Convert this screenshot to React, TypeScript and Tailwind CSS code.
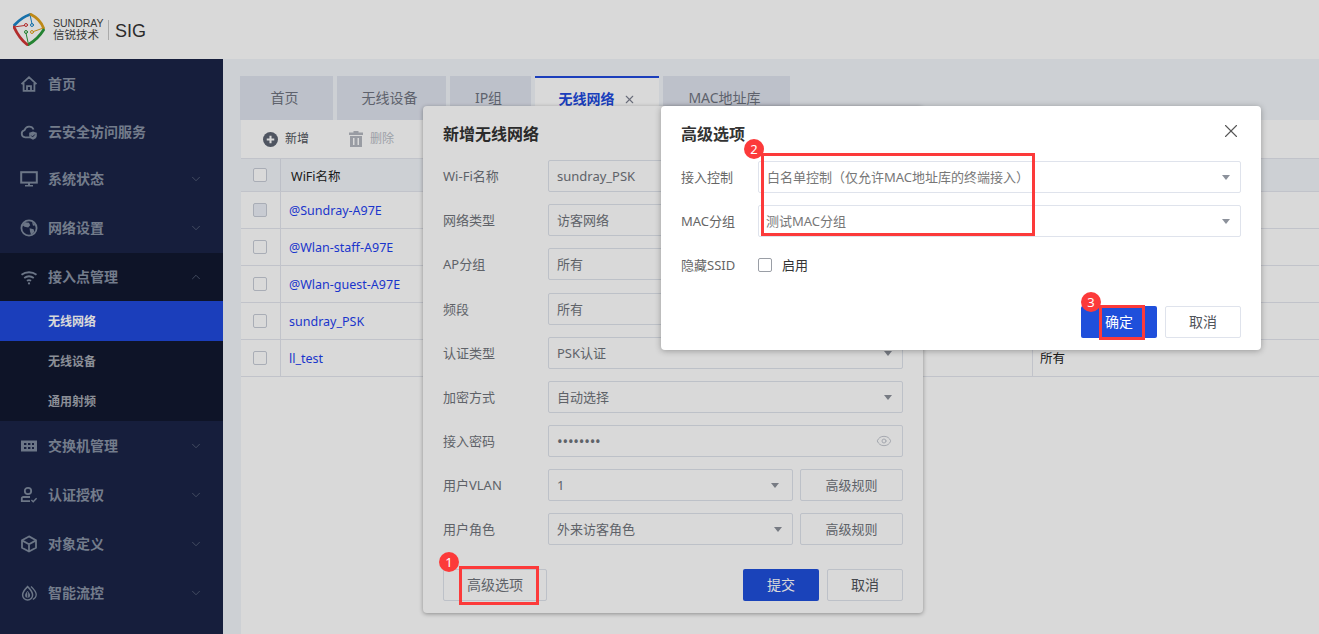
import React from "react"
import { ChevronDown, ChevronUp, Eye, X } from "lucide-react"

const navTop = [
  { label: "首页", icon: "home", h: "h-[48px]", arrow: false },
  { label: "云安全访问服务", icon: "cloud", h: "h-[47px]", arrow: false },
  { label: "系统状态", icon: "monitor", h: "h-[48px]", arrow: true },
  { label: "网络设置", icon: "globe", h: "h-[50px]", arrow: true },
]

const navBottom = [
  { label: "交换机管理", icon: "switch" },
  { label: "认证授权", icon: "user" },
  { label: "对象定义", icon: "cube" },
  { label: "智能流控", icon: "drop" },
]

const rows = ["@Sundray-A97E", "@Wlan-staff-A97E", "@Wlan-guest-A97E", "sundray_PSK", "ll_test"]

function NavIcon({ name }: { name: string }) {
  const stroke = { fill: "none", stroke: "currentColor", strokeWidth: 1.8 }
  return (
    <svg viewBox="0 0 18 18" className="h-[18px] w-[18px] shrink-0 text-[#7f8b9f]">
      {name === "home" && (
        <path {...stroke} d="M1.5 9.2 9 2.2l7.5 7M3.6 8v7.8h10.8V8M7 15.8v-4.6h4v4.6" />
      )}
      {name === "cloud" && (
        <>
          <path {...stroke} d="M10.5 14.4H5.2a3.7 3.7 0 0 1-.6-7.3 4.8 4.8 0 0 1 9-.6" />
          <path fill="currentColor" d="M13 8.6l3.8 1.2v3c0 2-1.6 3.3-3.8 4-2.2-.7-3.8-2-3.8-4v-3z" />
          <path fill="none" stroke="#1a2447" strokeWidth="1" d="M11.3 12.6l1.3 1.3 2.2-2.4" />
        </>
      )}
      {name === "monitor" && (
        <>
          <rect {...stroke} strokeWidth={2} x="1.2" y="2.2" width="15.6" height="10.4" />
          <path fill="currentColor" d="M8 12.6h2v2.4h3v1.6H5V15h3z" />
        </>
      )}
      {name === "globe" && (
        <>
          <circle {...stroke} cx="9" cy="9" r="7.6" />
          <path fill="currentColor" d="M5 3.2l4 .6 1.2 2.4-2 2.4-3.6-.8-2-1.6zM9.6 9.2l4 1 .8 2.6-3.2 3.2-1.2-3.4zM12 2.8l3.6 3.4-2.6.6z" />
        </>
      )}
      {name === "wifi" && (
        <>
          <path {...stroke} d="M1.5 6.8c4.4-3.4 10.6-3.4 15 0M4.2 10c2.9-2.1 6.7-2.1 9.6 0" />
          <path {...stroke} d="M6.9 12.8c1.3-.8 2.9-.8 4.2 0" />
          <circle cx="9" cy="15.4" r="1.1" fill="currentColor" />
        </>
      )}
      {name === "switch" && (
        <path
          fill="currentColor"
          fillRule="evenodd"
          d="M1 3.5h16v11H1zM4 6v2h2.4V6zm4 0v2h2.4V6zm4 0v2h2V6zM4 10v2h2.4v-2zm4 0v2h2.4v-2zm4 0v2h2v-2z"
        />
      )}
      {name === "user" && (
        <>
          <circle {...stroke} cx="8" cy="5" r="3.2" />
          <path {...stroke} d="M10 11H3.4c-1 0-1.6.7-1.6 1.6v2.6H10" />
          <path {...stroke} strokeWidth={1.4} d="M11.4 14l1.8 1.8 3.4-3.6" />
        </>
      )}
      {name === "cube" && (
        <path {...stroke} d="M9 1.4l7 3.8v7.6l-7 3.8-7-3.8V5.2zM2.4 5.6 9 9.2l6.6-3.6M9 9.2v7.2" />
      )}
      {name === "drop" && (
        <>
          <path {...stroke} strokeWidth={1.5} d="M7.6 2.6c3 3 5 5.6 5 8.4a5 5 0 0 1-10 0c0-2.800 2-5.400 5-8.400z" />
          <path fill="currentColor" d="M7.600 7c1.500 1.500 2.500 2.900 2.500 4.200a2.500 2.500 0 0 1-5 0c0-1.300 1-2.700 2.500-4.200z" />
          <path fill="none" stroke="#1a2447" strokeWidth="0.8" d="M7.600 8v5.600" />
          <path {...stroke} strokeWidth={1.3} d="M11 2.400c3 2.800 5.200 5.400 5.200 8.200 0 2.400-1.400 4-3.400 4.800" />
        </>
      )}
    </svg>
  )
}

function NavItem({ label, icon, h, arrow = true }: { label: string; icon: string; h: string; arrow?: boolean }) {
  return (
    <div className={`flex items-center pl-5 pr-[20px] ${h}`}>
      <NavIcon name={icon} />
      <span className="ml-[10px] text-[14px] font-bold leading-5 text-[#8892a4]">{label}</span>
      {arrow && <ChevronDown className="ml-auto h-[14px] w-[14px] text-[#5f6a80]" strokeWidth={1.3} />}
    </div>
  )
}

function Logo() {
  return (
    <svg viewBox="0 0 32 34" className="h-[34px] w-[32px]">
      <g fill="none" strokeLinecap="round">
        <path stroke="#1b85c9" strokeWidth="2.800" d="M1.500 12Q9 4 17 1.500" />
        <path stroke="#1b85c9" strokeWidth="1" d="M17 1.500 19 11" />
        <circle cx="19" cy="12" r="1.500" stroke="#1b85c9" strokeWidth="1" />
        <path stroke="#e0a11b" strokeWidth="2.800" d="M18 1.500Q27 6 30.500 15" />
        <path stroke="#e0a11b" strokeWidth="1" d="M30.500 15 20.500 18.500" />
        <circle cx="19" cy="19" r="1.500" stroke="#e0a11b" strokeWidth="1" />
        <path stroke="#2b9a3b" strokeWidth="2.800" d="M30.500 17Q25 26 15.500 31.500" />
        <path stroke="#2b9a3b" strokeWidth="1" d="M15.500 31.500 13 20" />
        <circle cx="13" cy="19" r="1.500" stroke="#2b9a3b" strokeWidth="1" />
        <path stroke="#d23636" strokeWidth="2.800" d="M14 31.500Q6 25 1 14" />
        <path stroke="#d23636" strokeWidth="1" d="M1 14 11.500 12.500" />
        <circle cx="13" cy="12" r="1.500" stroke="#d23636" strokeWidth="1" />
      </g>
    </svg>
  )
}

function Caret({ className = "" }: { className?: string }) {
  return <span className={`h-0 w-0 border-x-[4px] border-t-[5px] border-x-transparent border-t-[#8c919b] ${className}`} />
}

function Box({ text, className = "", caret = true }: { text: string; className?: string; caret?: boolean }) {
  return (
    <div className={`flex h-8 items-center rounded-[2px] border border-[#dfe3ec] pl-2 pr-[10px] text-[13px] leading-5 text-[#70747b] ${className}`}>
      <span>{text}</span>
      {caret && <Caret className="ml-auto" />}
    </div>
  )
}

function FormRow({ label, children, className = "" }: { label: string; children: React.ReactNode; className?: string }) {
  return (
    <div className={`flex items-center ${className}`}>
      <span className="w-[105px] shrink-0 text-[13px] leading-5 text-[#70747b]">{label}</span>
      {children}
    </div>
  )
}

function Btn({ text, primary = false, className = "" }: { text: string; primary?: boolean; className?: string }) {
  return (
    <div
      className={`flex h-8 items-center justify-center rounded-[2px] text-[14px] leading-5 ${
        primary ? "bg-[#1f4fdb] text-white" : "border border-[#dfe3ec] bg-white text-[#50545a]"
      } ${className}`}
    >
      {text}
    </div>
  )
}

function Badge({ n, className }: { n: number; className: string }) {
  return (
    <span className={`absolute flex h-5 w-5 items-center justify-center rounded-full bg-[#fc3a3a] text-[13px] leading-none text-white ${className}`}>
      {n}
    </span>
  )
}

function App() {
  return (
    <div className="relative h-[634px] w-[1319px] overflow-hidden bg-white font-['Noto_Sans','Noto_Sans_CJK_SC',sans-serif]">
      <header className="flex h-[59px] items-center pl-[13px]">
        <Logo />
        <div className="ml-2 flex w-[47px] flex-col font-['Liberation_Sans','Noto_Sans_CJK_SC',sans-serif] text-[#444]">
          <span className="text-[10.500px] leading-[11px]">SUNDRAY</span>
          <span className="text-[11.500px] leading-[13px]">信锐技术</span>
        </div>
        <span className="ml-[8px] h-5 w-px bg-[#c8c8c8]" />
        <span className="ml-[6px] mt-[2px] font-['Liberation_Sans',sans-serif] text-[18px] leading-6 text-[#333]">SIG</span>
      </header>

      <div className="flex h-[575px]">
        <aside className="flex w-[223px] shrink-0 flex-col bg-[#1a2447] pt-px">
          {navTop.map((item) => (
            <NavItem key={item.label} label={item.label} icon={item.icon} h={item.h} arrow={item.arrow} />
          ))}
          <div className="bg-[#111830]">
            <div className="flex h-[48px] items-center pl-5 pr-[20px]">
              <NavIcon name="wifi" />
              <span className="ml-[10px] text-[14px] font-bold leading-5 text-[#8892a4]">接入点管理</span>
              <ChevronUp className="ml-auto h-[14px] w-[14px] text-[#5f6a80]" strokeWidth={1.3} />
            </div>
            <div className="flex h-10 items-center bg-[#2049dc] pl-12 pt-[2px] text-[12px] font-bold leading-5 text-white">无线网络</div>
            <div className="flex h-10 items-center pl-12 pt-[2px] text-[12px] font-bold leading-5 text-[#a4a8b2]">无线设备</div>
            <div className="flex h-10 items-center pl-12 pt-[2px] text-[12px] font-bold leading-5 text-[#a4a8b2]">通用射频</div>
          </div>
          {navBottom.map((item) => (
            <NavItem key={item.label} label={item.label} icon={item.icon} h="h-[49px]" />
          ))}
        </aside>

        <main className="flex flex-1 flex-col bg-[#f1f5fa] pl-[17px] pt-[17px]">
          <div className="flex h-[44px] gap-1 text-[14px] leading-5 text-[#6f7480]">
            <div className="flex w-[93px] items-center justify-center bg-[#dfe3ee] pr-1">首页</div>
            <div className="flex w-[109px] items-center justify-center bg-[#dfe3ee] pr-1">无线设备</div>
            <div className="flex w-[81px] items-center justify-center bg-[#dfe3ee] pr-1">IP组</div>
            <div className="flex w-[124px] items-center justify-center gap-2 border-t-2 border-[#2049dc] bg-white font-bold text-[#2049dc]">
              无线网络
              <X className="h-[13px] w-[13px] text-[#7c8190]" strokeWidth={2} />
            </div>
            <div className="flex w-[127px] items-center justify-center bg-[#dfe3ee] pr-1">MAC地址库</div>
          </div>

          <div className="ml-px flex-1 bg-white">
            <div className="flex h-[39px] items-center border-b border-[#e3e6ee] pl-[22px] text-[12px] leading-5">
              <svg viewBox="0 0 16 16" className="h-[15px] w-[15px]">
                <circle cx="8" cy="8" r="8" fill="#5d6472" />
                <path d="M8 4v8M4 8h8" stroke="#fff" strokeWidth="2.200" />
              </svg>
              <span className="ml-[7px] text-[#50545c]">新增</span>
              <svg viewBox="0 0 14 16" className="ml-[40px] h-[16px] w-[14px]">
                <path fill="#b4b8c0" d="M4.500 0h5v1.500H14V4H0V1.500h4.500zM1 5h12v11H1zM4 7v7h1.500V7zM8.500 7v7H10V7z" fillRule="evenodd" />
              </svg>
              <span className="ml-[7px] text-[#b9bdc6]">删除</span>
            </div>
            <div className="flex h-[33px] border-b border-[#e3e6ee] bg-[#f1f5fa] text-[12.500px] leading-5 text-[#222]">
              <div className="flex w-[40px] items-center border-r border-[#dde1ea] pl-3">
                <span className="h-[14px] w-[14px] rounded-[2px] border border-[#c7ccd6] bg-white" />
              </div>
              <div className="flex flex-1 items-center pl-[10px] pt-[3px]">WiFi名称</div>
            </div>
            {rows.map((name, i) => (
              <div key={name} className="flex h-[37px] border-b border-[#e3e6ee] text-[12.500px] leading-5">
                <div className="flex w-[40px] items-center border-r border-[#e3e6ee] pl-3">
                  <span className={`h-[14px] w-[14px] rounded-[2px] border border-[#c7ccd6] ${i === 0 ? "bg-[#ebeff7]" : "bg-white"}`} />
                </div>
                <div className="flex w-[752px] items-center border-r border-[#e3e6ee] pl-[8px] pt-[2px] text-[#1f3ff0]">{name}</div>
                <div className="flex flex-1 items-center pl-[7px] pt-[2px] text-[#222]">所有</div>
              </div>
            ))}
          </div>
        </main>
      </div>

      {/* 第一层弹窗 */}
      <section className="absolute left-[423px] top-[106px] flex h-[507px] w-[500px] flex-col rounded-[4px] bg-white px-5 shadow-[0_1px_4px_rgba(0,0,0,0.35)]">
        <h2 className="mb-[14px] mt-4 text-[16px] font-bold leading-6 text-[#333]">新增无线网络</h2>
        <div className="flex flex-col gap-3">
          <FormRow label="Wi-Fi名称"><Box text="sundray_PSK" caret={false} className="flex-1" /></FormRow>
          <FormRow label="网络类型"><Box text="访客网络" className="flex-1" /></FormRow>
          <FormRow label="AP分组" className="mb-px"><Box text="所有" className="flex-1" /></FormRow>
          <FormRow label="频段"><Box text="所有" className="flex-1" /></FormRow>
          <FormRow label="认证类型"><Box text="PSK认证" className="flex-1" /></FormRow>
          <FormRow label="加密方式"><Box text="自动选择" className="flex-1" /></FormRow>
          <FormRow label="接入密码">
            <div className="flex h-8 flex-1 items-center rounded-[2px] border border-[#dfe3ec] pl-2 pr-[10px] text-[15px] leading-5 tracking-[-0.2px] text-[#70747b]">
              <span>••••••••</span>
              <Eye className="ml-auto h-4 w-4 text-[#c3c7cf]" strokeWidth={1.5} />
            </div>
          </FormRow>
          <FormRow label="用户VLAN">
            <Box text="1" className="w-[245px] !pr-[13px]" />
            <Btn text="高级规则" className="ml-[7px] flex-1 !text-[13px] !text-[#70747b]" />
          </FormRow>
          <FormRow label="用户角色">
            <Box text="外来访客角色" className="w-[245px]" />
            <Btn text="高级规则" className="ml-[7px] flex-1 !text-[13px] !text-[#70747b]" />
          </FormRow>
        </div>
        <div className="mb-3 mt-auto flex gap-2">
          <Btn text="高级选项" className="mr-auto w-[104px] !text-[#70747b]" />
          <Btn text="提交" primary className="w-[76px]" />
          <Btn text="取消" className="w-[76px]" />
        </div>
      </section>

      {/* 遮罩 */}
      <div className="absolute inset-0 bg-black/15" />

      {/* 第二层弹窗 */}
      <section className="absolute left-[661px] top-[106px] flex h-[244px] w-[600px] flex-col rounded-[4px] bg-white px-5 shadow-[0_1px_6px_rgba(0,0,0,0.3)]">
        <X className="absolute right-[19px] top-[14px] h-[22px] w-[22px] text-[#555]" strokeWidth={1.2} />
        <h2 className="mb-[15px] mt-4 text-[16px] font-bold leading-6 text-[#333]">高级选项</h2>
        <div className="flex flex-col gap-3">
          <div className="flex items-center">
            <span className="w-[77px] shrink-0 text-[13px] leading-5 text-[#666]">接入控制</span>
            <Box text="白名单控制（仅允许MAC地址库的终端接入）" className="flex-1 !text-[#777]" />
          </div>
          <div className="flex items-center">
            <span className="w-[77px] shrink-0 text-[13px] leading-5 text-[#666]">MAC分组</span>
            <Box text="测试MAC分组" className="flex-1 !pl-[7px] !text-[#777]" />
          </div>
          <div className="flex h-[32px] items-center">
            <span className="w-[77px] shrink-0 text-[13px] leading-5 text-[#666]">隐藏SSID</span>
            <span className="h-[14px] w-[14px] rounded-[2px] border border-[#9a9ea6]" />
            <span className="ml-[10px] text-[13px] leading-5 text-[#333]">启用</span>
          </div>
        </div>
        <div className="mb-3 mt-auto flex justify-end gap-2">
          <Btn text="确定" primary className="w-[76px]" />
          <Btn text="取消" className="w-[76px]" />
        </div>
      </section>

      {/* 红色标注 */}
      <div className="absolute left-[459px] top-[566px] h-[39px] w-[80px] border-[3px] border-[#fc3a3a]" />
      <div className="absolute left-[761px] top-[153px] h-[83px] w-[274px] border-[3px] border-[#fc3a3a]" />
      <div className="absolute left-[1099px] top-[305px] h-[35px] w-[46px] border-[3px] border-[#fc3a3a]" />
      <Badge n={1} className="left-[439px] top-[552px]" />
      <Badge n={2} className="left-[744px] top-[139px]" />
      <Badge n={3} className="left-[1081px] top-[292px]" />
    </div>
  )
}

export default App
